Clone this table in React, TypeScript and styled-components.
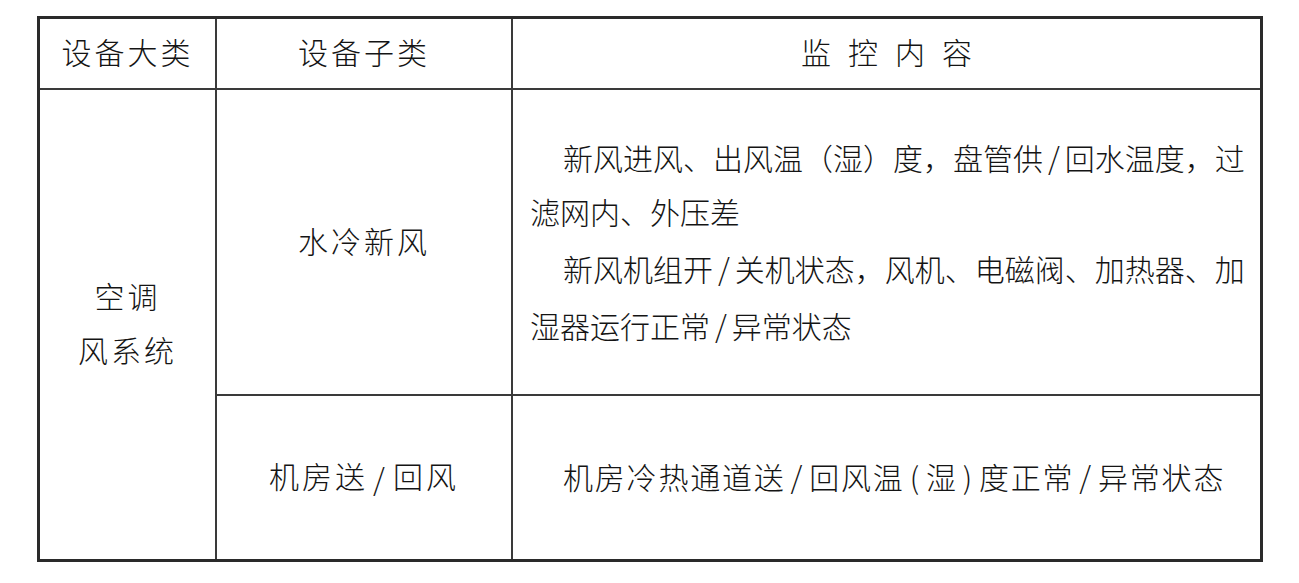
import React from 'react'
import styled, { createGlobalStyle } from 'styled-components'

const GlobalStyle = createGlobalStyle`
  html, body {
    margin: 0;
    padding: 0;
    background: #ffffff;
  }
  body {
    font-family: "Liberation Serif", "Noto Sans CJK SC", serif;
    color: #141414;
  }
`

const Frame = styled.div`
  box-sizing: border-box;
  margin: 16px 0 0 37px;
  width: 1226px;
  height: 546px;
  border: 3px solid #2a2a2a;
  display: grid;
  grid-template-columns: 175px 296px 1fr;
  grid-template-rows: 71px 306px 163px;
`

const Cell = styled.div<{ $left?: boolean; $bottom?: boolean; $span?: number }>`
  box-sizing: border-box;
  display: flex;
  align-items: center;
  justify-content: center;
  text-align: center;
  font-size: 30px;
  font-weight: 300;
  letter-spacing: 3px;
  line-height: 54px;
  border-left: ${p => (p.$left ? '2px solid #3a3a3a' : 'none')};
  border-bottom: ${p => (p.$bottom ? '2px solid #3a3a3a' : 'none')};
  grid-row: ${p => (p.$span ? `span ${p.$span}` : 'auto')};
  padding-top: 1px;
`

const Spaced = styled.span`
  letter-spacing: 17px;
  margin-right: -17px;
`

const Content = styled.div<{ $bottom?: boolean }>`
  box-sizing: border-box;
  display: flex;
  flex-direction: column;
  justify-content: center;
  padding-left: 17px;
  font-size: 30px;
  font-weight: 300;
  line-height: 54px;
  border-left: 2px solid #3a3a3a;
  border-bottom: ${p => (p.$bottom ? '2px solid #3a3a3a' : 'none')};
`

const Line = styled.div<{ $indent?: boolean; $spacing?: number }>`
  white-space: nowrap;
  padding-left: ${p => (p.$indent ? '33px' : '0')};
  letter-spacing: ${p => p.$spacing ?? 0}px;
`

// narrow punctuation (slash, half-width brackets) set with a little air
const P = styled.span`
  font-family: "Noto Sans CJK SC", sans-serif;
  font-weight: 200;
  padding: 0 5px;
`

export default function App() {
  return (
    <>
      <GlobalStyle />
      <Frame>
        <Cell $bottom>设备大类</Cell>
        <Cell $left $bottom>设备子类</Cell>
        <Cell $left $bottom>
          <Spaced>监控内容</Spaced>
        </Cell>

        <Cell $span={2}>
          <div>
            空调
            <br />
            风系统
          </div>
        </Cell>
        <Cell $left $bottom>水冷新风</Cell>
        <Content $bottom>
          <Line $indent>
            新风进风、出风温（湿）度，盘管供<P>/</P>回水温度，过
          </Line>
          <Line>滤网内、外压差</Line>
          <Line $indent>
            新风机组开<P>/</P>关机状态，风机、电磁阀、加热器、加
          </Line>
          <Line>
            湿器运行正常<P>/</P>异常状态
          </Line>
        </Content>

        <Cell $left>
          机房送<P>/</P>回风
        </Cell>
        <Content>
          <Line $indent $spacing={1.8}>
            机房冷热通道送<P>/</P>回风温<P>(</P>湿<P>)</P>度正常<P>/</P>异常状态
          </Line>
        </Content>
      </Frame>
    </>
  )
}
